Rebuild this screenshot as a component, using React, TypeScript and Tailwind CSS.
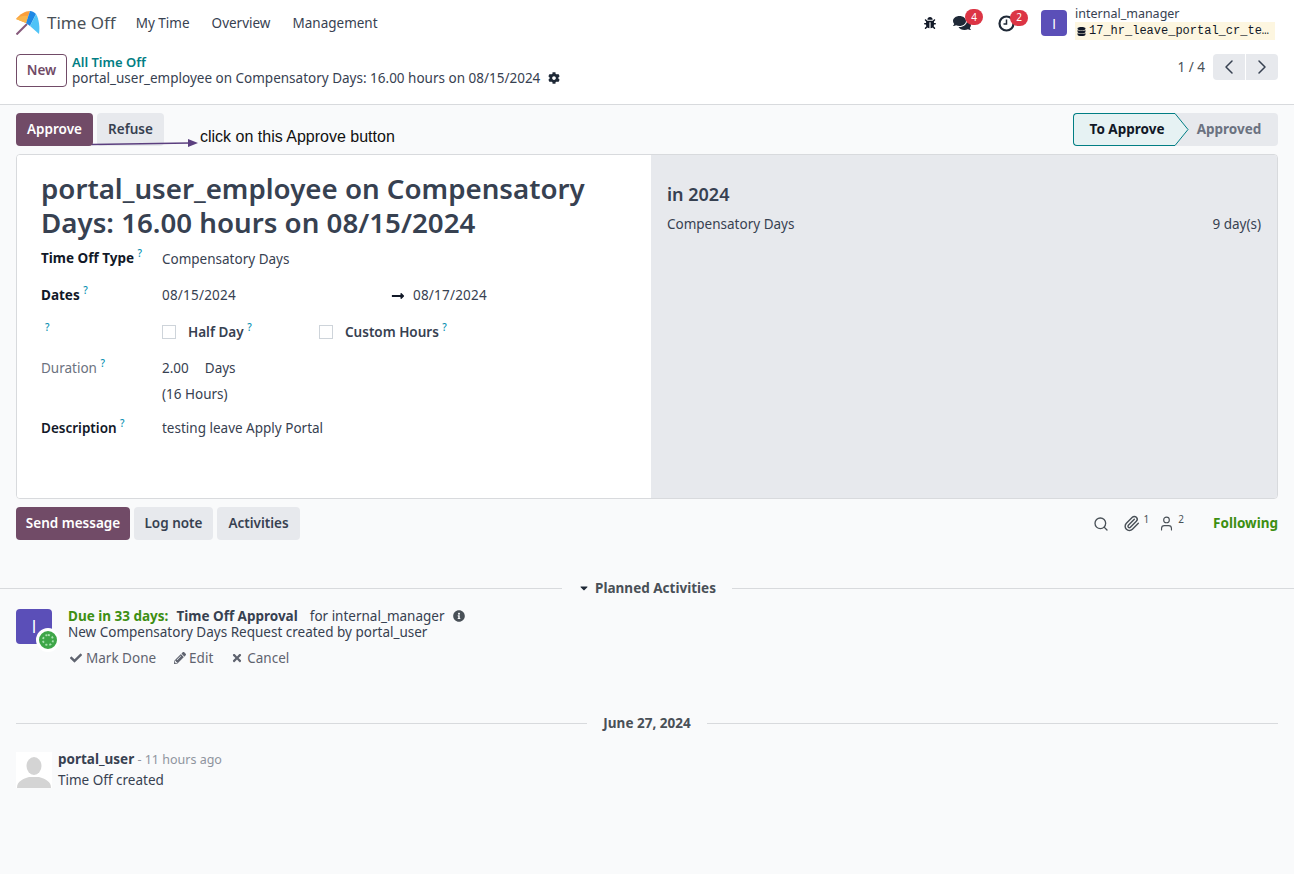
import { ChevronLeft, ChevronRight, Paperclip, Search, User } from 'lucide-react';
import {
  FaBug,
  FaCaretDown,
  FaCheck,
  FaCog,
  FaComments,
  FaDatabase,
  FaInfoCircle,
  FaLongArrowAltRight,
  FaPencilAlt,
  FaTimes,
} from 'react-icons/fa';

const font = 'font-["Noto_Sans",sans-serif]';

function Help({ className = '' }: { className?: string }) {
  return <sup className={`text-[10px] font-medium text-[#0891b2] top-[-6px] ${className}`}>?</sup>;
}

function Badge({ n }: { n: number }) {
  return (
    <span className="absolute left-[12px] top-[-5px] flex h-[16px] w-[18px] items-center justify-center rounded-full bg-[#dc3545] text-[10px] text-white">
      {n}
    </span>
  );
}

function Logo() {
  return (
    <svg width="24" height="24" viewBox="0 0 24 24">
      <path d="M0.5 23.5 L11 13" stroke="#875a7b" strokeWidth="2" />
      <path d="M0 8 C4 3 9 0 14 0 L10 12 Z" fill="#fb9f3c" />
      <path d="M14 0 C16 0 18 1 20 3 L14 15 L10 12 Z" fill="#1e88e5" />
      <path d="M20 3 C23 8 24 16 23 23 L14 15 Z" fill="#4fc3f7" />
      <path d="M0 8 L10 12 L12 5 C8 4 4 5 0 8 Z" fill="#f9b54c" />
    </svg>
  );
}

function ClockIcon() {
  return (
    <svg width="17" height="17" viewBox="0 0 17 17" fill="none" stroke="#1f2937">
      <circle cx="8.5" cy="8.5" r="7" strokeWidth="2.2" />
      <path d="M8.5 4.5 V9 H5.5" strokeWidth="1.5" />
    </svg>
  );
}

function Row({ label, children, className = '' }: { label: React.ReactNode; children: React.ReactNode; className?: string }) {
  return (
    <div className={`flex ${className}`}>
      <div className="w-[121px] shrink-0">{label}</div>
      <div className="flex-1">{children}</div>
    </div>
  );
}

function Separator({ children }: { children: React.ReactNode }) {
  return (
    <div className="flex items-center gap-4">
      <div className="h-px flex-1 bg-[#d8dadd]" />
      <div className="flex items-center gap-[5px] font-bold text-[#495057]">{children}</div>
      <div className="h-px flex-1 bg-[#d8dadd]" />
    </div>
  );
}

export default function App() {
  return (
    <div className={`${font} relative min-h-[874px] bg-[#f9fafb] text-[13.5px] text-[#374151]`}>
      <header className="border-b border-[#d8dadd] bg-white">
        <nav className="flex h-[46px] items-center pl-4 pr-[19px]">
          <Logo />
          <span className="ml-[7px] text-[17px] text-[#495057]">Time Off</span>
          <div className="ml-[20px] flex gap-[22px] text-[#374151]">
            <span>My Time</span>
            <span>Overview</span>
            <span>Management</span>
          </div>
          <div className="ml-auto flex items-center">
            <FaBug className="mr-[17px] text-[12px] text-[#111827]" />
            <span className="relative mr-[27px]">
              <FaComments className="text-[18px] text-[#1f2937]" />
              <Badge n={4} />
            </span>
            <span className="relative mr-[26px]">
              <ClockIcon />
              <Badge n={2} />
            </span>
            <span className="flex h-[26px] w-[26px] items-center justify-center rounded bg-[#5b4fb8] font-['Open_Sans',sans-serif] text-[15px] text-white">I</span>
            <div className="ml-2 w-[200px] leading-[15px]">
              <div className="text-[12.5px] text-[#374151]">internal_manager</div>
              <div className="mt-[1px] flex h-[18px] items-center gap-[3px] bg-[#fdf6e0] pl-[2px] font-['Liberation_Mono',monospace] text-[12px] text-[#111827]">
                <FaDatabase className="text-[9px]" />
                <span>17_hr_leave_portal_cr_te…</span>
              </div>
            </div>
          </div>
        </nav>
        <div className="flex h-[58px] pl-4 pr-4">
          <div className="mt-[8px] flex h-[33px] w-[51px] items-center justify-center rounded border border-[#714b67] font-semibold text-[#714b67]">New</div>
          <div className="ml-[5px] mt-[8px] leading-[16px]">
            <div className="text-[13px] font-semibold text-[#017e84]">All Time Off</div>
            <div className="flex items-center gap-2 text-[#374151]">
              portal_user_employee on Compensatory Days: 16.00 hours on 08/15/2024
              <FaCog className="text-[12px] text-[#1f2937]" />
            </div>
          </div>
          <div className="ml-auto mt-[8px] flex h-[26px] items-center">
            <span className="mr-2 text-[#495057]">1 / 4</span>
            <span className="flex h-[26px] w-[32px] items-center justify-center rounded-l bg-[#e7e9ed]">
              <ChevronLeft size={24} strokeWidth={1.5} />
            </span>
            <span className="ml-px flex h-[26px] w-[32px] items-center justify-center rounded-r bg-[#e7e9ed]">
              <ChevronRight size={24} strokeWidth={1.5} />
            </span>
          </div>
        </div>
      </header>

      <main className="px-4">
        <div className="flex h-[49px] items-start pt-2">
          <button className="h-[33px] w-[77px] rounded bg-[#714b67] font-semibold text-white">Approve</button>
          <button className="ml-[4px] h-[33px] w-[67px] rounded bg-[#e7e9ed] font-semibold text-[#374151]">Refuse</button>
          <div className="relative ml-auto flex h-[33px]">
            <span className="flex w-[102px] items-center justify-center rounded-l border border-r-0 border-[#017e84] bg-[#e6f2f3] pl-[5px] font-bold text-[#111827]">
              To Approve
            </span>
            <span className="flex w-[103px] items-center justify-center rounded-r bg-[#e7e9ed] pl-[5px] font-bold text-[#6b7280]">Approved</span>
            <svg className="absolute left-[102px] top-0" width="14" height="33" viewBox="0 0 14 33">
              <path d="M0 0.5 L13 16.5 L0 32.5 Z" fill="#e6f2f3" />
              <path d="M0 0.5 L13 16.5 L0 32.5" fill="none" stroke="#017e84" strokeWidth="1" />
            </svg>
          </div>
        </div>

        <section className="flex h-[345px] overflow-hidden rounded border border-[#d8dadd]">
          <div className="w-[634px] shrink-0 bg-white pl-[24px] pr-4 pt-[16px]">
            <h1 className="text-[27.7px] font-semibold leading-[34px] text-[#374151]">
              portal_user_employee on Compensatory Days: 16.00 hours on 08/15/2024
            </h1>
            <div className="mt-[9px]">
              <Row label={<span className="font-bold text-[#111827]">Time Off Type <Help /></span>} className="h-[37px] items-start">
                <span className="relative top-[1px]">Compensatory Days</span>
              </Row>
              <Row label={<span className="font-bold text-[#111827]">Dates <Help /></span>} className="h-[37px] items-start">
                <div className="flex">
                  <span className="w-[229px] tracking-[0.2px]">08/15/2024</span>
                  <FaLongArrowAltRight className="mr-[8px] mt-[4px] text-[14px] text-[#111827]" />
                  <span className="tracking-[0.2px]">08/17/2024</span>
                </div>
              </Row>
              <Row label={<Help className="ml-1" />} className="h-[36px] items-start">
                <div className="flex items-center">
                  <span className="h-[14px] w-[14px] border border-[#ced4da] bg-white" />
                  <span className="ml-[12px] w-[131px] font-semibold">Half Day <Help /></span>
                  <span className="h-[14px] w-[14px] border border-[#ced4da] bg-white" />
                  <span className="ml-[12px] font-semibold">Custom Hours <Help /></span>
                </div>
              </Row>
              <Row label={<span className="text-[#6b7280]">Duration <Help /></span>} className="h-[60px] items-start">
                <div className="flex gap-4">
                  <span>2.00</span>
                  <span>Days</span>
                </div>
                <div className="mt-[6px]">(16 Hours)</div>
              </Row>
              <Row label={<span className="font-semibold text-[#111827]">Description <Help /></span>}>
                <span>testing leave Apply Portal</span>
              </Row>
            </div>
          </div>
          <div className="flex-1 bg-[#e7e9ed] pl-[16px] pr-4 pt-[27px]">
            <h2 className="text-[18px] font-semibold leading-[24px] text-[#374151]">in 2024</h2>
            <div className="mt-[8px] flex justify-between">
              <span>Compensatory Days</span>
              <span>9 day(s)</span>
            </div>
          </div>
        </section>

        <div className="mt-2 flex h-[33px] items-center">
          <button className="h-[33px] w-[114px] rounded bg-[#714b67] font-semibold text-white">Send message</button>
          <button className="ml-[4px] h-[33px] w-[79px] rounded bg-[#e7e9ed] font-semibold">Log note</button>
          <button className="ml-[4px] h-[33px] w-[83px] rounded bg-[#e7e9ed] font-semibold">Activities</button>
          <div className="ml-auto flex items-center text-[#495057]">
            <Search size={16} strokeWidth={2} />
            <span className="ml-[14px] flex items-center">
              <Paperclip size={17} />
              <sup className="ml-[4px] text-[10px]">1</sup>
            </span>
            <span className="ml-[9px] flex items-center">
              <User size={17} strokeWidth={1.6} />
              <sup className="ml-[3px] text-[10px]">2</sup>
            </span>
            <span className="ml-[29px] font-bold text-[#3d8f12]">Following</span>
          </div>
        </div>
      </main>

      <div className="mt-[38px] px-4">
        <div className="-mx-4">
          <Separator>
            <FaCaretDown className="text-[12px] text-[#1f2937]" /> Planned Activities
          </Separator>
        </div>
        <div className="mt-[11px] flex">
          <div className="relative h-[35px] w-[36px] shrink-0">
            <span className="flex h-full w-full items-center justify-center rounded bg-[#5b4fb8] font-['Open_Sans',sans-serif] text-[18px] text-white">I</span>
            <span className="absolute left-[20px] top-[19px] flex h-[24px] w-[24px] items-center justify-center rounded-full border-[3px] border-white bg-[#3ea648]">
              <span className="h-[12px] w-[12px] rounded-full border-2 border-dotted border-[#a8e0ae] bg-[#3ea648]" />
            </span>
          </div>
          <div className="-mt-px ml-4 leading-[16px]">
            <div className="flex items-center">
              <span className="font-bold text-[#3d8f12]">Due in 33 days:</span>
              <span className="ml-2 font-bold">Time Off Approval</span>
              <span className="ml-3">for internal_manager</span>
              <FaInfoCircle className="ml-2 text-[12px] text-[#495057]" />
            </div>
            <div>New Compensatory Days Request created by portal_user</div>
            <div className="mt-[10px] flex items-center text-[#5f636f]">
              <span className="ml-[2px] flex items-center gap-[4px]"><FaCheck className="text-[12px]" />Mark Done</span>
              <span className="ml-[18px] flex items-center gap-[3px]"><FaPencilAlt className="text-[12px]" />Edit</span>
              <span className="ml-[18px] flex items-center gap-[4px]"><FaTimes className="text-[12px]" />Cancel</span>
            </div>
          </div>
        </div>

        <div className="mt-[47px]">
          <Separator>June 27, 2024</Separator>
        </div>
        <div className="mt-[18px] flex">
          <span className="h-[36px] w-[36px] bg-white">
            <svg width="36" height="36" viewBox="0 0 36 36" fill="#d4d4d4">
              <ellipse cx="18" cy="14" rx="7.5" ry="9" />
              <path d="M1 36 C1 29 7 27 13 25 H23 C29 27 35 29 35 36 Z" />
            </svg>
          </span>
          <div className="-mt-[3px] ml-[6px] leading-[21px]">
            <div>
              <span className="font-bold">portal_user</span>
              <span className="text-[12.5px] text-[#8f949e]"> - 11 hours ago</span>
            </div>
            <div>Time Off created</div>
          </div>
        </div>
      </div>

      {/* annotation drawn over the screenshot */}
      <div className="absolute left-[200px] top-[128px] font-['Liberation_Sans',sans-serif] text-[16px] leading-[18px] text-[#111]">click on this Approve button</div>
      <svg className="absolute left-[92px] top-[138px]" width="108" height="10">
        <path d="M0 6.5 L98 5" stroke="#5b3f7f" strokeWidth="1.5" />
        <path d="M96 1 L106 5 L96 9 Z" fill="#5b3f7f" />
      </svg>
    </div>
  );
}
